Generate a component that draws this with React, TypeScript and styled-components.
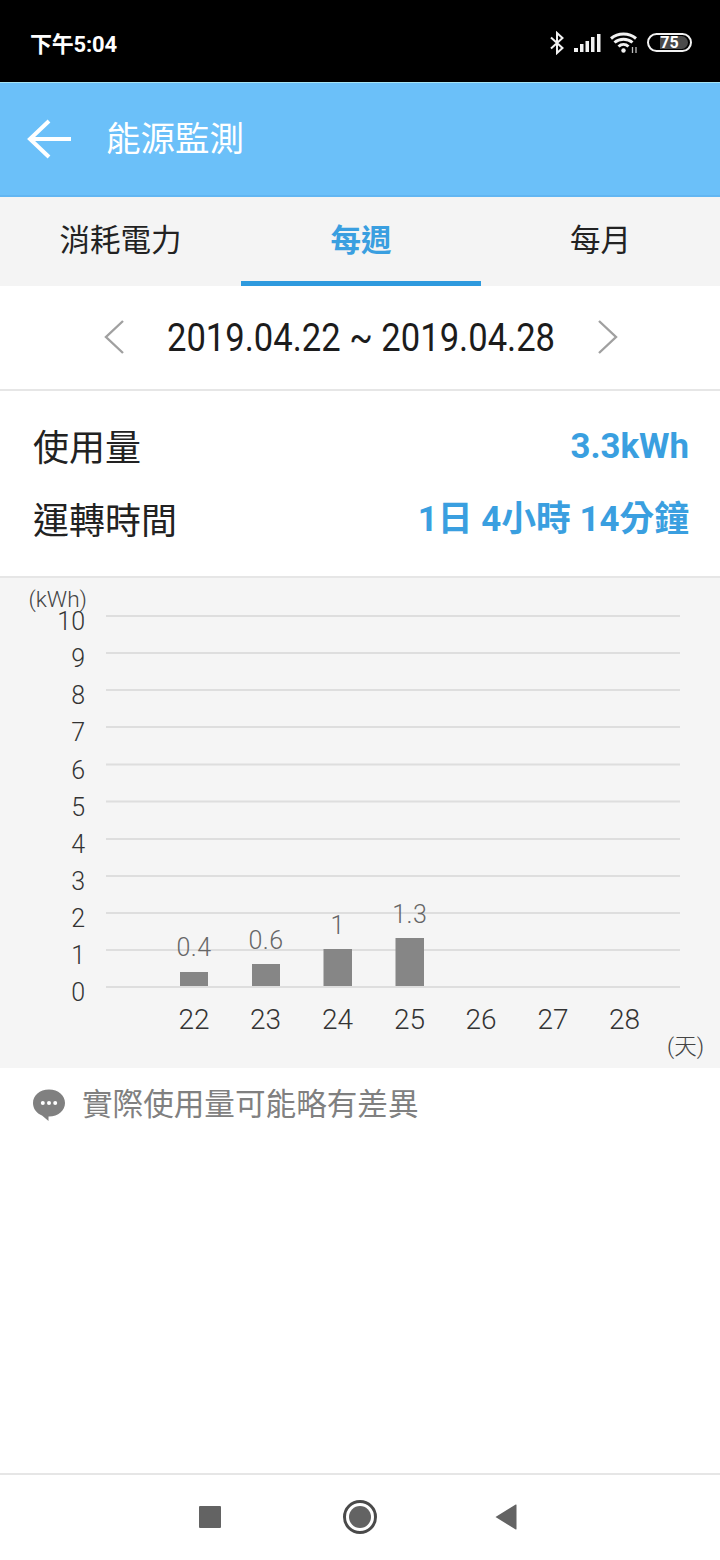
import React from 'react';
import styled, { createGlobalStyle } from 'styled-components';

const SANS = '"Roboto", "Noto Sans CJK TC", "Noto Sans", sans-serif';

const Global = createGlobalStyle`
  html, body { margin: 0; padding: 0; background: #fff; }
  body { font-family: ${SANS}; }
  * { box-sizing: border-box; }
`;

const Screen = styled.div`
  width: 720px;
  height: 1560px;
  display: flex;
  flex-direction: column;
  background: #fff;
  overflow: hidden;
`;

const StatusBar = styled.div`
  height: 82px;
  flex: none;
  background: #000;
  color: #fff;
  display: flex;
  align-items: center;
  justify-content: space-between;
  padding: 3px 28px 0 30px;
`;

const Clock = styled.span`
  font-size: 22px;
  font-weight: 700;
  letter-spacing: -0.2px;
  margin-top: -2px;
`;

const StatusIcons = styled.div`
  display: flex;
  align-items: center;
  gap: 9px;
`;

const Battery = styled.div`
  position: relative;
  width: 45px;
  height: 19px;
  border: 2px solid #f2f2f2;
  border-radius: 10px;
  display: flex;
  align-items: center;
  justify-content: center;
  font-size: 16px;
  font-weight: 700;
  line-height: 1;
  overflow: hidden;
`;

const BatteryFill = styled.div`
  position: absolute;
  left: 11px;
  top: 1px;
  bottom: 1px;
  right: 2px;
  background: #4a4a4a;
  border-radius: 0 7px 7px 0;
`;

const BatteryText = styled.span`
  position: relative;
`;

const Header = styled.header`
  height: 115px;
  flex: none;
  background: #6bc0f9;
  border-top: 1px solid #a5e4f5;
  border-bottom: 2px solid #62b6f2;
  display: flex;
  align-items: center;
  padding: 0 0 0 27px;
  gap: 33px;
  color: #fff;
`;

const Title = styled.h1`
  margin: 0 0 5px;
  font-size: 34.5px;
  font-weight: 400;
  line-height: 1;
  font-family: "Noto Sans CJK TC", sans-serif;
`;

const Tabs = styled.nav`
  height: 89px;
  flex: none;
  background: #f4f4f4;
  display: grid;
  grid-template-columns: 241px 240px 239px;
`;

const Tab = styled.div<{ $active?: boolean }>`
  display: flex;
  align-items: center;
  justify-content: center;
  padding-bottom: 3px;
  font-family: "Noto Sans CJK TC", sans-serif;
  font-size: 30.5px;
  font-weight: ${p => (p.$active ? 700 : 400)};
  color: ${p => (p.$active ? '#3a9fe0' : '#222')};
  border-bottom: 5px solid ${p => (p.$active ? '#2e9ade' : 'transparent')};
`;

const DateRow = styled.div`
  height: 105px;
  flex: none;
  display: flex;
  align-items: center;
  justify-content: center;
  gap: 42px;
  padding: 0 0 2px 2px;
  border-bottom: 2px solid #e6e6e6;
`;

const DateText = styled.span`
  font-size: 38px;
  color: #1c1c1c;
  transform: scaleX(0.91);
  width: 390px;
  margin-top: 2px;
  display: flex;
  justify-content: center;
  white-space: nowrap;
`;

const Summary = styled.section`
  height: 185px;
  flex: none;
  padding: 18px 31px 0 33px;
`;

const SummaryRow = styled.div`
  height: 72.5px;
  display: flex;
  align-items: center;
  justify-content: space-between;
`;

const SummaryLabel = styled.span`
  font-family: "Noto Sans CJK TC", sans-serif;
  font-size: 36px;
  color: #222;
`;

const SummaryValue = styled.span`
  font-size: 34.8px;
  font-weight: 700;
  line-height: 44px;
  margin-top: 2px;
  color: #3a9fe0;
`;

const ChartPanel = styled.section`
  height: 492px;
  flex: none;
  background: #f5f5f5;
  border-top: 2px solid #e6e6e6;
`;

const ChartSvg = styled.svg`
  display: block;
  font-family: ${SANS};
  font-weight: 300;
`;

const Note = styled.div`
  flex: 1;
  display: flex;
  align-items: flex-start;
  gap: 16px;
  padding: 13px 0 0 32px;
  font-family: "Noto Sans CJK TC", sans-serif;
  font-size: 30.6px;
  line-height: 43px;
  color: #808080;
`;

const NoteIcon = styled.svg`
  flex: none;
  margin-top: 8px;
`;

const NavBar = styled.footer`
  height: 87px;
  flex: none;
  border-top: 2px solid #e6e6e6;
  display: flex;
  align-items: center;
  padding: 0 0 1px 199px;
  background: #fff;
`;

const NavSquare = styled.div`
  width: 22px;
  height: 22px;
  background: #636363;
  border-radius: 1px;
  margin-right: 122px;
`;

const NavHome = styled.div`
  width: 34px;
  height: 34px;
  border-radius: 50%;
  border: 3px solid #4a4a4a;
  padding: 3px;
  margin-right: 118px;

  &::after {
    content: '';
    display: block;
    width: 100%;
    height: 100%;
    border-radius: 50%;
    background: #636363;
  }
`;

const GRID_YS = [616, 653, 690, 727, 764.5, 801.5, 839, 876, 913, 950, 987];
const TOP = 578;

const bars = [
  { day: 22, x: 180, w: 28, top: 972, label: '0.4', labelY: 956 },
  { day: 23, x: 252, w: 28, top: 964, label: '0.6', labelY: 949 },
  { day: 24, x: 323.5, w: 28.5, top: 949, label: '1', labelY: 934 },
  { day: 25, x: 395.5, w: 28.5, top: 938, label: '1.3', labelY: 923 },
];

const days = [
  { d: 22, x: 194 },
  { d: 23, x: 265.5 },
  { d: 24, x: 337.5 },
  { d: 25, x: 409.5 },
  { d: 26, x: 481 },
  { d: 27, x: 553 },
  { d: 28, x: 624.5 },
];

const Chart = () => (
  <ChartSvg width={720} height={490} viewBox={`0 ${TOP} 720 490`}>
    <text x={87} y={607} textAnchor="end" fontSize={22.7} fill="#444">(kWh)</text>
    {GRID_YS.map((g, i) => (
      <g key={g}>
        <rect x={106} y={g - 1} width={574} height={2} fill="#dedede" />
        <text x={85} y={Math.round(g) + 14} textAnchor="end" fontSize={25} fill="#333">
          {10 - i}
        </text>
      </g>
    ))}
    {bars.map(b => (
      <g key={b.day}>
        <rect x={b.x} y={b.top} width={b.w} height={986 - b.top} fill="#868686" />
        <text x={b.x + b.w / 2} y={b.labelY} textAnchor="middle" fontSize={25} fill="#666" letterSpacing={0.5}>
          {b.label}
        </text>
      </g>
    ))}
    {days.map(d => (
      <text key={d.d} x={d.x} y={1029} textAnchor="middle" fontSize={28} fill="#333">
        {d.d}
      </text>
    ))}
    <text x={704} y={1054} textAnchor="end" fontSize={22.5} fill="#444">(天)</text>
  </ChartSvg>
);

export default function App() {
  return (
    <Screen>
      <Global />
      <StatusBar>
        <Clock>下午5:04</Clock>
        <StatusIcons>
          <svg width="16" height="24" viewBox="0 0 16 24" fill="none" stroke="#f2f2f2" strokeWidth="2">
            <path d="M2 6.5 13.5 17 8 22V2l5.5 5L2 17.5" />
          </svg>
          <svg width="27" height="20" viewBox="0 0 27 20" fill="#f2f2f2">
            <rect x="0" y="15" width="4" height="4" />
            <rect x="6" y="11" width="3.5" height="8" />
            <rect x="11.5" y="8" width="3.5" height="11" />
            <rect x="17" y="4" width="3.5" height="15" />
            <rect x="23" y="1" width="3.5" height="18" />
          </svg>
          <svg width="28" height="22" viewBox="0 0 28 22" fill="none" stroke="#f2f2f2" strokeWidth="3">
            <path d="M1 6.5C8 .5 19 .5 26 6.5" />
            <path d="M4.500 10.500C9.500 6 17.500 6 22.500 10.500" />
            <path d="M8.500 14.500C11.500 11.800 15.500 11.800 18.500 14.500" />
            <circle cx="13.500" cy="18.500" r="2.200" fill="#f2f2f2" stroke="none" />
            <path d="M22.500 15v6M26 15v6" strokeWidth="1.300" stroke="#bdbdbd" />
          </svg>
          <Battery>
            <BatteryFill />
            <BatteryText>75</BatteryText>
          </Battery>
        </StatusIcons>
      </StatusBar>

      <Header>
        <svg width="46" height="40" viewBox="0 0 46 40" fill="none" stroke="#fff" strokeWidth="4">
          <path d="M22 2 3 20l19 18" />
          <path d="M3 20h41" />
        </svg>
        <Title>能源監測</Title>
      </Header>

      <Tabs>
        <Tab>消耗電力</Tab>
        <Tab $active>每週</Tab>
        <Tab>每月</Tab>
      </Tabs>

      <DateRow>
        <svg width="20" height="34" viewBox="0 0 20 34" fill="none" stroke="#a0a0a0" strokeWidth="2.400">
          <path d="M19 1 2 17l17 16" />
        </svg>
        <DateText>2019.04.22 ~ 2019.04.28</DateText>
        <svg width="20" height="34" viewBox="0 0 20 34" fill="none" stroke="#a0a0a0" strokeWidth="2.400">
          <path d="M1 1l17 16L1 33" />
        </svg>
      </DateRow>

      <Summary>
        <SummaryRow>
          <SummaryLabel>使用量</SummaryLabel>
          <SummaryValue>3.3kWh</SummaryValue>
        </SummaryRow>
        <SummaryRow>
          <SummaryLabel>運轉時間</SummaryLabel>
          <SummaryValue>1日 4小時 14分鐘</SummaryValue>
        </SummaryRow>
      </Summary>

      <ChartPanel>
        <Chart />
      </ChartPanel>

      <Note>
        <NoteIcon width="34" height="33" viewBox="0 0 34 33">
          <path d="M17 0.500C26.400 0.500 33 6.500 33 14S26.400 27.500 17 27.500h-.5L16.500 32 10 26.400C4.500 24.400 1 19.700 1 14 1 6.500 7.600 0.500 17 0.500Z" fill="#808080" />
          <circle cx="10.800" cy="14" r="2" fill="#fff" />
          <circle cx="17" cy="14" r="2" fill="#fff" />
          <circle cx="23.200" cy="14" r="2" fill="#fff" />
        </NoteIcon>
        <span>實際使用量可能略有差異</span>
      </Note>

      <NavBar>
        <NavSquare />
        <NavHome />
        <svg width="22" height="26" viewBox="0 0 22 26" fill="#636363">
          <path d="M21.500 1v24a.5.5 0 0 1-.8.4L.5 13 20.700.6a.5.5 0 0 1 .8.4Z" />
        </svg>
      </NavBar>
    </Screen>
  );
}
